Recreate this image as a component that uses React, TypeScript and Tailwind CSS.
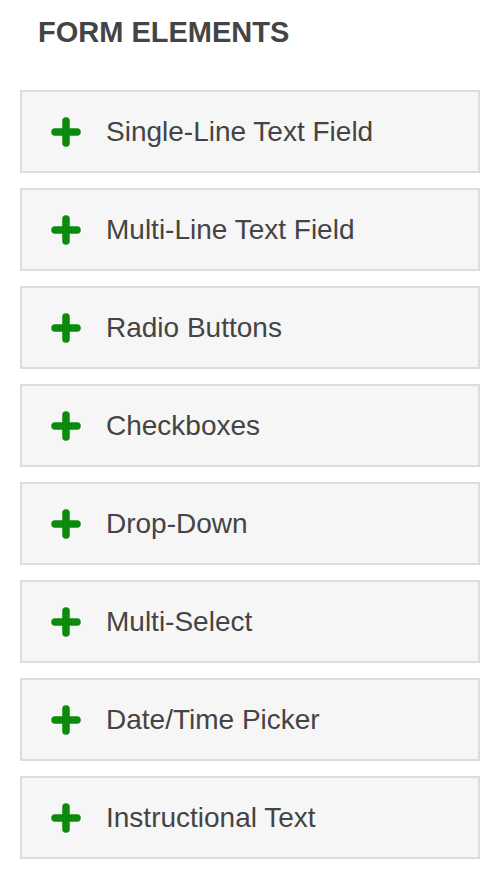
import React from "react";

const items = [
  "Single-Line Text Field",
  "Multi-Line Text Field",
  "Radio Buttons",
  "Checkboxes",
  "Drop-Down",
  "Multi-Select",
  "Date/Time Picker",
  "Instructional Text",
];

function Plus() {
  return (
    <svg width="30" height="30" viewBox="0 0 30 30" className="shrink-0">
      <path d="M4 15H26M15 4V26" stroke="#0b8a0b" strokeWidth="7.5" strokeLinecap="round" fill="none" />
    </svg>
  );
}

export default function App() {
  return (
    <div className="w-[500px] h-[886px] bg-white" style={{ fontFamily: '"Liberation Sans", Arial, sans-serif' }}>
      <div className="pt-[18px] pl-[38px] text-[29px] leading-none font-bold text-[#444444]">FORM ELEMENTS</div>
      <div className="mt-[43px] mx-[20px] flex flex-col gap-[15px]">
        {items.map((t) => (
          <div
            key={t}
            className="h-[83px] border-2 border-[#dddddd] bg-[#f6f6f6] flex items-center pl-[29px] gap-[25px]"
          >
            <Plus />
            <span className="text-[28px] text-[#444444] leading-none">{t}</span>
          </div>
        ))}
      </div>
    </div>
  );
}
